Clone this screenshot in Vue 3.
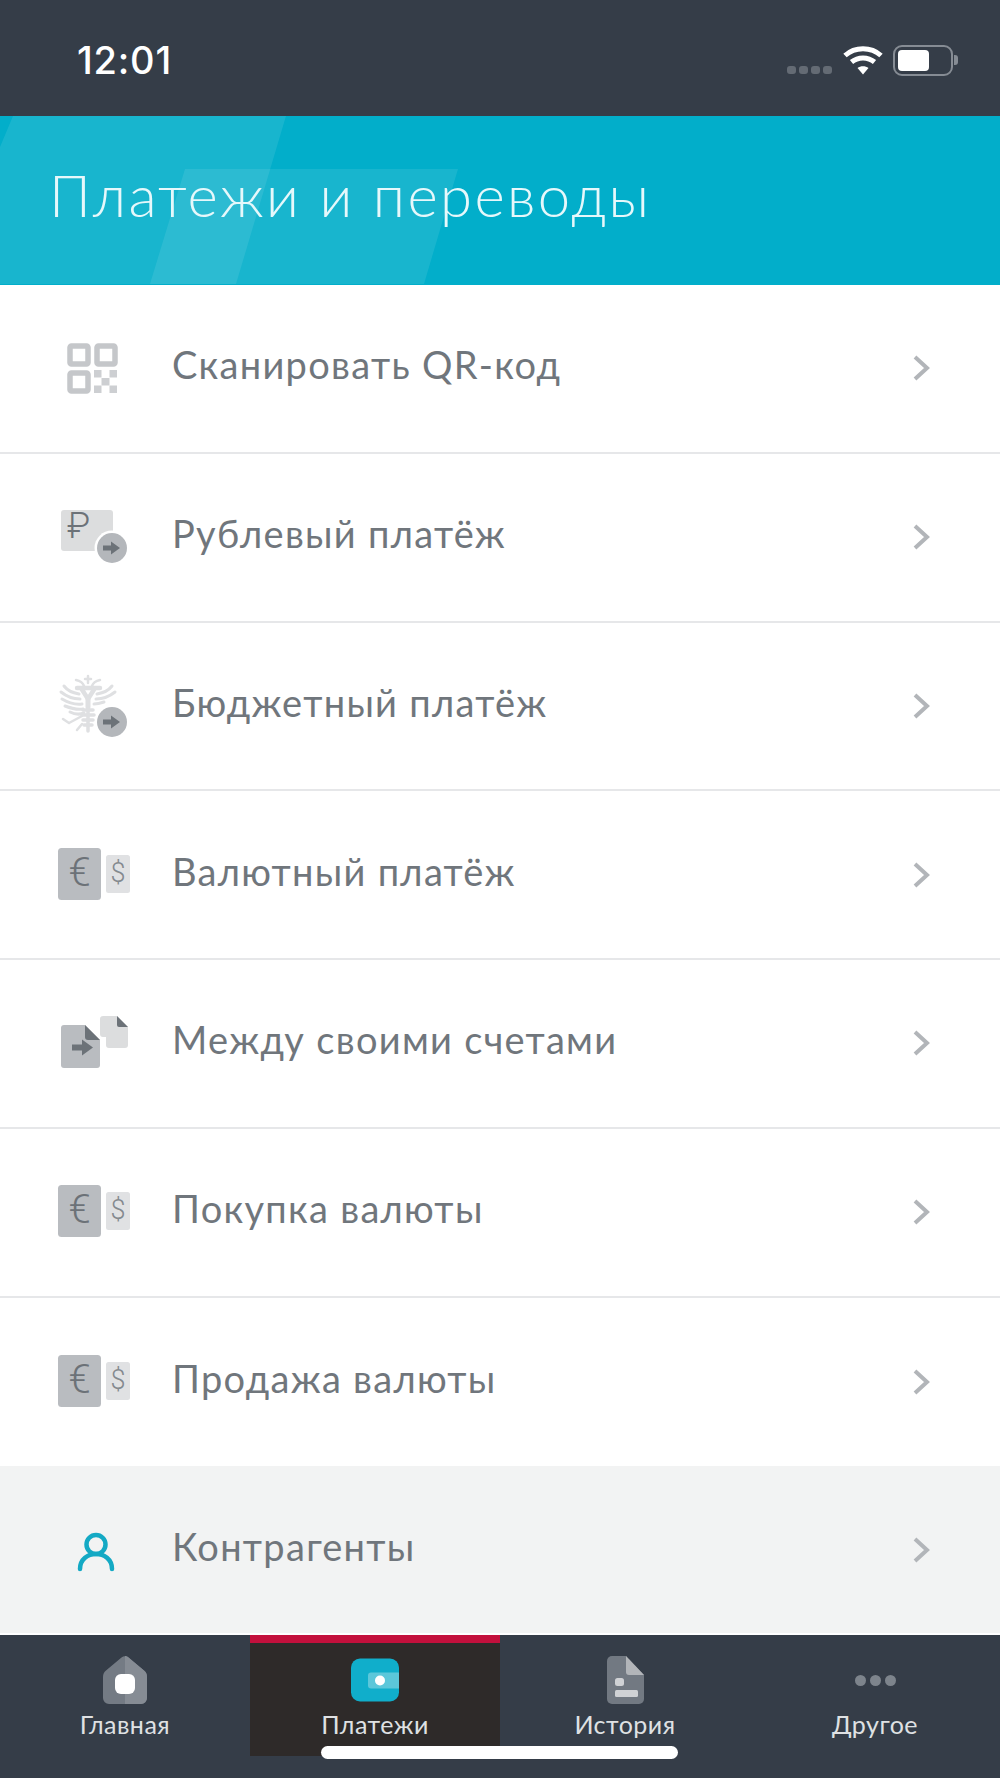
<template>
  <div class="page">
    <div class="status">
      <div class="time">12:01</div>
      <div class="status-icons">
        <div class="signal"><i></i><i></i><i></i><i></i></div>
        <svg class="wifi" width="40" height="30" viewBox="0 0 40 30">
          <path d="M2 10.500C12 1.500 28 1.500 38 10.500" fill="none" stroke="#fff" stroke-width="5" />
          <path d="M8.500 17C15 11.500 25 11.500 31.500 17" fill="none" stroke="#fff" stroke-width="5" />
          <path d="M14.500 23C17.500 20.500 22.500 20.500 25.500 23L20 29.500Z" fill="#fff" />
        </svg>
        <div class="battery"><div class="battery-fill"></div></div>
        <div class="battery-nub"></div>
      </div>
    </div>

    <div class="header">
      <svg class="header-bg" width="1000" height="169" viewBox="0 0 1000 169" preserveAspectRatio="none">
        <polygon points="13,0 286,0 236,168 0,168 0,31" fill="#fff" fill-opacity="0.09" />
        <polygon points="185,53 458,53 424,168 150,168" fill="#fff" fill-opacity="0.09" />
      </svg>
      <div class="title">Платежи и переводы</div>
    </div>

    <div class="list">
      <div v-for="row in rows" :key="row.label" class="row" :class="{ active: row.icon === 'person' }">
        <svg class="row-icon" width="80" height="80" viewBox="0 0 80 80">
          <g v-if="row.icon === 'qr'" fill="none" stroke="#c5c7ca" stroke-width="5.500">
            <rect x="15" y="18" width="18" height="18" rx="1.500" />
            <rect x="42" y="18" width="18" height="18" rx="1.500" />
            <rect x="15" y="45" width="18" height="18" rx="1.500" />
            <g fill="#cdcfd2" stroke="none">
              <rect x="39" y="42" width="7.500" height="7.500" />
              <rect x="54.500" y="42" width="7.500" height="7.500" />
              <rect x="46.500" y="50" width="8" height="7.500" />
              <rect x="39" y="57.500" width="7.500" height="7.500" />
              <rect x="54.500" y="57.500" width="7.500" height="7.500" />
            </g>
          </g>

          <g v-else-if="row.icon === 'ruble'">
            <rect x="6" y="13" width="52" height="41" rx="3" fill="#dcddde" />
            <text x="12" y="41" class="glyph ruble">₽</text>
            <circle cx="57" cy="51" r="17.500" fill="#fff" />
            <circle cx="57" cy="51" r="15" fill="#b4b7bb" />
            <path d="M48 48.500H56V44.500L65 51L56 57.500V53.500H48Z" fill="#6c7278" />
          </g>

          <g v-else-if="row.icon === 'eagle'">
            <g fill="none" stroke="#dfe0e2" stroke-linecap="round">
              <path d="M22 22H45M26 22L33 33L40 22" stroke-width="4.500" />
              <path d="M33 33V41" stroke-width="5" />
              <path d="M21 14C26 15 28 17 29 20M45 14C40 15 38 17 37 20" stroke-width="2.500" />
              <path d="M33 10V17M30 13H36" stroke-width="2.500" />
              <path d="M24 28C18 27 12 24 9 20M25 33C18 33 11 30 6 26M27 38C19 39 12 36 7 33M28 43C21 44 15 42 10 40M29 47C24 49 19 48 15 46" stroke-width="3" />
              <path d="M42 28C48 27 54 24 57 20M41 33C48 33 55 30 60 26M39 38C43 38 46 37 49 36" stroke-width="3" />
              <path d="M28 44H38M27 49H39M28 54H38M29 59H37M33 44V65" stroke-width="3.500" />
              <path d="M27 50L14 57M14 57L8 53M27 58L22 64" stroke-width="2.500" />
            </g>
            <circle cx="57" cy="56" r="17" fill="#fff" />
            <circle cx="57" cy="56" r="15" fill="#b4b7bb" />
            <path d="M48 53.500H56V49.500L65 56L56 62.500V58.500H48Z" fill="#6c7278" />
          </g>

          <g v-else-if="row.icon === 'money'">
            <rect x="3" y="13" width="43" height="52" rx="3.500" fill="#b9bcc0" />
            <text x="24.500" y="51" class="glyph euro">€</text>
            <rect x="51" y="20" width="24" height="38" rx="2.500" fill="#e0e1e3" />
            <text x="63" y="47" class="glyph dollar">$</text>
          </g>

          <g v-else-if="row.icon === 'files'">
            <path d="M9 22H30L45 37V62A3 3 0 0 1 42 65H9A3 3 0 0 1 6 62V25A3 3 0 0 1 9 22Z" fill="#b9bcc0" />
            <path d="M30 22L45 37H33A3 3 0 0 1 30 34Z" fill="#6c7278" />
            <path d="M17 41.500H27V36.500L38 44.500L27 52.500V47.500H17Z" fill="#6c7278" />
            <path d="M48 13H62L73 24V42A3 3 0 0 1 70 45H54A3 3 0 0 1 51 42V34H48A3 3 0 0 1 45 31V16A3 3 0 0 1 48 13Z" fill="#dcddde" />
            <path d="M62 13L73 24H64A2 2 0 0 1 62 22Z" fill="#6c7278" />
          </g>

          <g v-else fill="none" stroke="#14a9c4" stroke-width="4.500">
            <circle cx="41" cy="34.500" r="9.500" />
            <path d="M25 59C25 39 57 39 57 59" stroke-linecap="round" />
          </g>
        </svg>
        <div class="row-label">{{ row.label }}</div>
        <svg class="chevron" width="18" height="26" viewBox="0 0 18 26">
          <path d="M3 2L15 13L3 24" fill="none" stroke="#b2b5b9" stroke-width="4" />
        </svg>
      </div>
    </div>

    <div class="tabs">
      <div class="tab">
        <svg width="44" height="48" viewBox="0 0 44 48">
          <path d="M18.500 1.500C20.500 -0.300 23.500 -0.300 25.500 1.500L41 14.500C43 16.200 44 18 44 21V42A6 6 0 0 1 38 48H6A6 6 0 0 1 0 42V21C0 18 1 16.200 3 14.500Z" fill="#747b84" />
          <path d="M22 0C23.300 0 24.500 0.500 25.500 1.500L41 14.500C43 16.200 44 18 44 21V42A6 6 0 0 1 38 48H22Z" fill="#868c94" />
          <rect x="12" y="18" width="20" height="20" rx="6" fill="#fff" />
        </svg>
        <span>Главная</span>
      </div>
      <div class="tab current">
        <svg width="48" height="43" viewBox="0 0 48 43">
          <rect width="48" height="43" rx="9" fill="#10aecb" />
          <path d="M20 14H48V30H20A3 3 0 0 1 17 27V17A3 3 0 0 1 20 14Z" fill="#5cc7da" />
          <circle cx="29" cy="22" r="5" fill="#fff" />
        </svg>
        <span>Платежи</span>
      </div>
      <div class="tab">
        <svg width="37" height="48" viewBox="0 0 37 48">
          <path d="M5 0H19L37 19V43A5 5 0 0 1 32 48H5A5 5 0 0 1 0 43V5A5 5 0 0 1 5 0Z" fill="#727982" />
          <path d="M19 0L37 19H22A3 3 0 0 1 19 16Z" fill="#b2b5b9" />
          <rect x="8" y="22" width="9" height="8" rx="2.500" fill="#d0d2d5" />
          <rect x="8" y="34" width="23" height="7" rx="1.500" fill="#d0d2d5" />
        </svg>
        <span>История</span>
      </div>
      <div class="tab">
        <div class="dots"><i></i><i></i><i></i></div>
        <span>Другое</span>
      </div>
      <div class="home-line"></div>
    </div>
  </div>
</template>

<script setup>
const rows = [
  { icon: 'qr', label: 'Сканировать QR-код' },
  { icon: 'ruble', label: 'Рублевый платёж' },
  { icon: 'eagle', label: 'Бюджетный платёж' },
  { icon: 'money', label: 'Валютный платёж' },
  { icon: 'files', label: 'Между своими счетами' },
  { icon: 'money', label: 'Покупка валюты' },
  { icon: 'money', label: 'Продажа валюты' },
  { icon: 'person', label: 'Контрагенты' }
]
</script>

<style scoped>
* {
  box-sizing: border-box;
  font-family: "Lato", "Noto Sans", sans-serif;
}

.page {
  width: 1000px;
  height: 1778px;
  display: flex;
  flex-direction: column;
  background: #fff;
  overflow: hidden;
}

.status {
  height: 116px;
  flex: none;
  background: #353d48;
  display: flex;
  justify-content: space-between;
  padding: 41px 42px 0 77px;
}

.time {
  font-family: "Inter", sans-serif;
  font-size: 38px;
  line-height: 38px;
  font-weight: 500;
  color: #fff;
  letter-spacing: 0.8px;
}

.status-icons {
  display: flex;
  align-items: flex-start;
  padding-top: 4px;
}

.signal {
  display: flex;
  gap: 3px;
  margin: 21px 11px 0 0;
}

.signal i {
  width: 9px;
  height: 8px;
  border-radius: 3px;
  background: #646b74;
}

.wifi {
  margin-right: 10px;
}

.battery {
  width: 60px;
  height: 31px;
  padding: 3px;
  border: 2px solid #868c94;
  border-radius: 9px;
}

.battery-fill {
  width: 31px;
  height: 21px;
  background: #fff;
  border-radius: 4px;
}

.battery-nub {
  width: 4px;
  height: 10px;
  margin: 10px 0 0 1px;
  background: #868c94;
  border-radius: 0 3px 3px 0;
}

.header {
  position: relative;
  height: 169px;
  flex: none;
  background: #02aeca;
  display: flex;
  align-items: center;
  padding: 0 0 12px 49px;
}

.header-bg {
  position: absolute;
  top: 0;
  left: 0;
}

.title {
  position: relative;
  font-size: 58px;
  font-weight: 300;
  color: #e6f8fb;
  letter-spacing: 2.4px;
}

.list {
  flex: 1;
  display: grid;
  grid-template-rows: repeat(8, 1fr);
}

.row {
  display: flex;
  align-items: center;
  padding: 0 70px 0 55px;
  border-bottom: 2px solid #e6e7e9;
}

.row:nth-last-child(2) {
  border-bottom: 0;
}

.row.active {
  background: #f2f3f3;
  border-bottom: 2px solid #fff;
}

.row-icon {
  flex: none;
  margin-right: 37px;
}

.row-label {
  flex: 1;
  margin-bottom: 8px;
  font-size: 38px;
  color: #70767c;
  letter-spacing: 1.3px;
}

.chevron {
  flex: none;
}

.glyph {
  fill: #6c7278;
  font-family: "Roboto", "DejaVu Sans", sans-serif;
  font-weight: 300;
}

.ruble {
  font-size: 36px;
}

.euro {
  font-size: 40px;
  text-anchor: middle;
}

.dollar {
  font-size: 27px;
  text-anchor: middle;
  fill: #84898f;
}

.tabs {
  position: relative;
  height: 143px;
  flex: none;
  background: #353d48;
  display: grid;
  grid-template-columns: repeat(4, 1fr);
}

.tab {
  height: 121px;
  display: flex;
  flex-direction: column;
  align-items: center;
  padding-top: 21px;
}

.tab svg {
  height: 48px;
  flex: none;
}

.tab span {
  margin-top: 4px;
  font-size: 25px;
  line-height: 32px;
  color: #dfe1e3;
  letter-spacing: 0.5px;
}

.tab.current {
  background: #2e2a29;
  border-top: 8px solid #c3103c;
  padding-top: 13px;
}

.dots {
  height: 48px;
  display: flex;
  align-items: center;
  gap: 4px;
}

.dots i {
  width: 11px;
  height: 11px;
  border-radius: 50%;
  background: #7d848c;
}

.home-line {
  position: absolute;
  left: 321px;
  top: 111px;
  width: 357px;
  height: 13px;
  background: #fff;
  border-radius: 7px;
}
</style>
